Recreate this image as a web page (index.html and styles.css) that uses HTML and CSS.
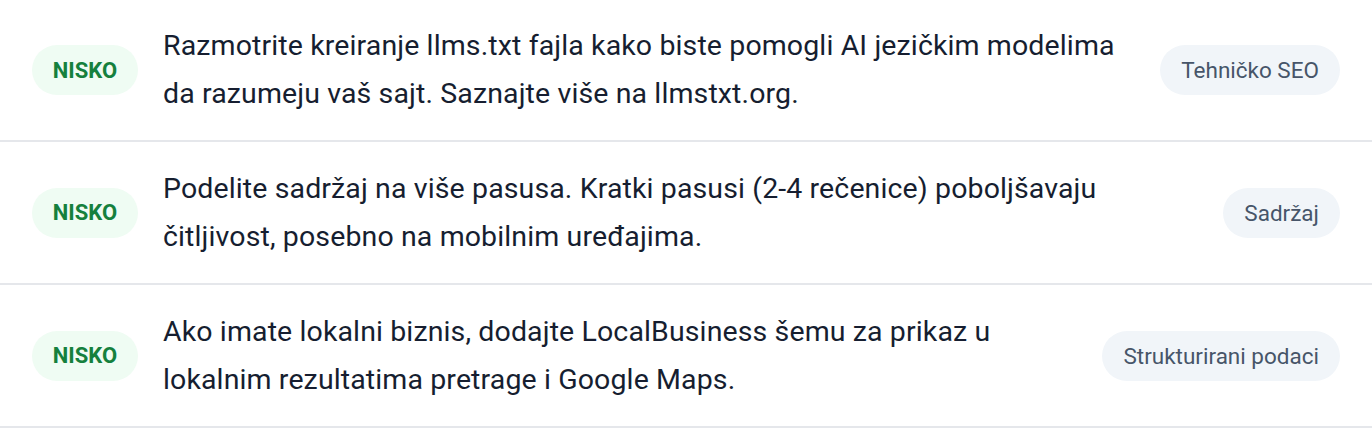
FILE: index.html
```html
<!DOCTYPE html>
<html lang="sr">
<head>
<meta charset="utf-8">
<link rel="stylesheet" href="styles.css">
</head>
<body>
<ul class="list">
  <li class="row">
    <span class="badge">NISKO</span>
    <p class="text"><span class="line">Razmotrite kreiranje llms.txt fajla kako biste pomogli AI jezičkim modelima</span><span class="line">da razumeju vaš sajt. Saznajte više na llmstxt.org.</span></p>
    <span class="tag">Tehničko SEO</span>
  </li>
  <li class="row">
    <span class="badge">NISKO</span>
    <p class="text"><span class="line">Podelite sadržaj na više pasusa. Kratki pasusi (2-4 rečenice) poboljšavaju</span><span class="line">čitljivost, posebno na mobilnim uređajima.</span></p>
    <span class="tag">Sadržaj</span>
  </li>
  <li class="row">
    <span class="badge">NISKO</span>
    <p class="text"><span class="line">Ako imate lokalni biznis, dodajte LocalBusiness šemu za prikaz u</span><span class="line">lokalnim rezultatima pretrage i Google Maps.</span></p>
    <span class="tag">Strukturirani podaci</span>
  </li>
</ul>
</body>
</html>
```

FILE: styles.css
```css
* { box-sizing: border-box; }
html, body { margin: 0; padding: 0; background: #ffffff; }
body { font-family: Roboto, "Noto Sans", sans-serif; }
.list { list-style: none; margin: 0; padding: 0; }
.row {
  display: flex;
  align-items: center;
  height: 142px;
  padding: 0 32px;
  border-bottom: 2px solid #e5e7eb;
}
.row + .row { height: 143px; }
.badge {
  flex: none;
  width: 106px;
  height: 50px;
  border-radius: 25px;
  background: #effcf3;
  color: #15803d;
  font-weight: 700;
  font-size: 22px;
  display: flex;
  align-items: center;
  justify-content: center;
}
.text {
  flex: 1;
  margin: 0 24px 0 25px;
  font-size: 28.5px;
  letter-spacing: 0.12px;
  line-height: 48px;
  color: #161e30;
}
.line { display: block; white-space: nowrap; }
.tag {
  flex: none;
  height: 50px;
  padding: 0 21px;
  border-radius: 25px;
  background: #f1f5f9;
  color: #475569;
  font-size: 22.5px;
  display: flex;
  align-items: center;
}
```
